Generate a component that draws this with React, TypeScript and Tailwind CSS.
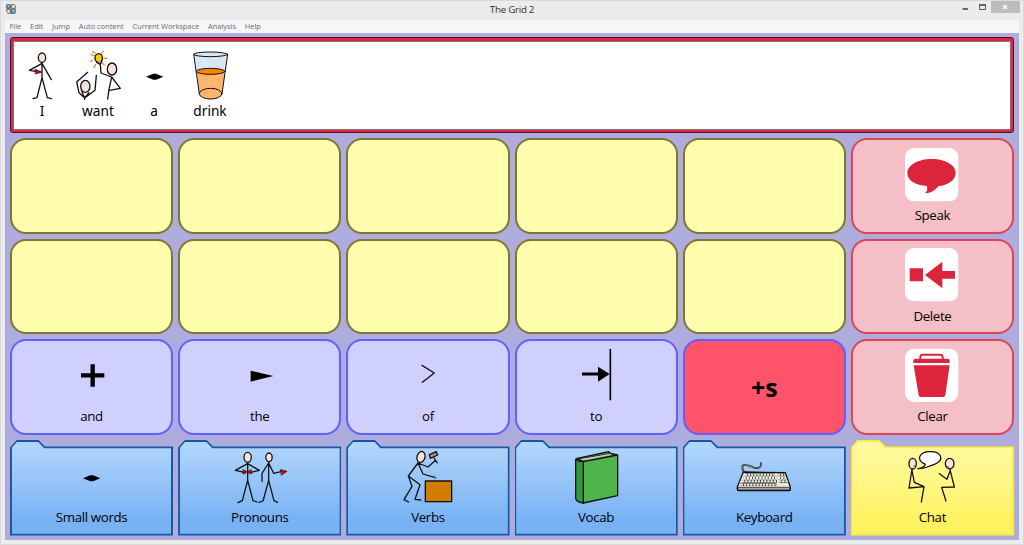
import type { ReactNode } from "react";
import clsx from "clsx";

const INK = "#111111";
const RED = "#dc243c";

function Diamond({ x, y }: { x: number; y: number }) {
  return <path d={`M${x - 26} ${y}L${x - 4} ${y - 9}H${x + 4}L${x + 26} ${y}L${x + 4} ${y + 9}H${x - 4}Z`} fill="#000" />;
}

function Word({ x, label, children }: { x: number; label: string; children: ReactNode }) {
  return (
    <div className="flex w-14 flex-col items-center">
      <svg width="56" height="52" viewBox={`${x} 150 168 156`} fill="none" stroke={INK} strokeWidth="3.9" strokeLinecap="round" strokeLinejoin="round">
        {children}
      </svg>
      <span className="font-['Noto_Sans',sans-serif] text-[13.7px] leading-[18px] text-black">{label}</span>
    </div>
  );
}

function MessageBar() {
  return (
    <div className="-ml-[0.5px] h-24 rounded-[3px] border border-[#501028] bg-[#dc2840] p-[2.5px]">
      <div className="flex h-full border border-[#85727c] bg-white pt-[8.5px]">
        <Word x={42} label="I">
          <ellipse cx="126" cy="173" rx="11" ry="14" fill="#f8e3dc" />
          <path d="M126 187V233L111 293L99 296M126 233L142 293L154 296M126 190L88 211L112 215M126 190L154 239" />
          <path d="M106 208L126 216L107 222Z" fill="#e00000" strokeWidth="2" />
        </Word>
        <Word x={210} label="want">
          <path d="M282 167L273 164M286 159L277 155M305 160L310 154M311 175H321M306 188L313 195M287 194L282 203M278 181L271 184" stroke="#f08a24" />
          <ellipse cx="296" cy="174" rx="11" ry="13" fill="#ffc90e" />
          <path d="M290 187L301 193L306 182" fill="#c8b4ad" />
          <ellipse cx="336" cy="207" rx="14" ry="18" fill="#f8e3dc" />
          <path d="M301 193L303 219L335 231L327 268L323 297M335 231L361 265L328 271" />
          <ellipse cx="256" cy="259" rx="14" ry="18" fill="#f8e3dc" />
          <path d="M263 217L230 246L237 278L254 294L285 271L289 226M245 274L254 294L267 278M254 294V298" />
        </Word>
        <Word x={378} label="a">
          <g stroke="none"><Diamond x={464} y={230} /></g>
        </Word>
        <Word x={546} label="drink">
          <path d="M582 163L599 284Q632 313 666 284L682 163Z" fill="#d8e7f4" stroke="none" />
          <path d="M590 214L600 284Q632 310 665 284L675 214Z" fill="#ffb56b" stroke="none" />
          <ellipse cx="632" cy="214" rx="43" ry="9" fill="#ff8500" strokeWidth="3" />
          <ellipse cx="632" cy="163" rx="51" ry="7" fill="#d8e7f4" strokeWidth="3" />
          <ellipse cx="632" cy="281" rx="34" ry="16" fill="#ffb56b" strokeWidth="3" />
          <path d="M581 163L598 281M683 163L666 281" strokeWidth="3" />
        </Word>
      </div>
    </div>
  );
}

function CellBody({ label, x, y, children }: { label: string; x: number; y: number; children: ReactNode }) {
  return (
    <>
      <svg width="100" height="64" viewBox={`${x} ${y} 300 192`} fill="none" stroke={INK} strokeWidth="3.9" strokeLinecap="round" strokeLinejoin="round" className="shrink-0">
        {children}
      </svg>
      <span className="text-[13.3px] leading-[26px] font-medium tracking-[-0.35px] text-black">{label}</span>
    </>
  );
}

const tones = {
  yellow: "border-[#81762f] bg-[#fffeae]",
  violet: "border-[#605fff] bg-[#d0d0ff]",
  pink: "border-[#df4359] bg-[#f4bfc7]",
  red: "border-[#605fff] bg-[#ff5369]",
};

function Cell({ tone, children }: { tone: keyof typeof tones; children?: ReactNode }) {
  return (
    <div className={clsx("min-h-0 rounded-[16px] border-2", tones[tone])}>
      <div className="-mt-0.5 flex flex-col items-center">{children}</div>
    </div>
  );
}

function Folder({ yellow, children }: { yellow?: boolean; children: ReactNode }) {
  return (
    <div className={clsx("min-h-0 p-[1.7px] [clip-path:polygon(0_7.5px,6.7px_0,28.5px_0,35px_6.7px,100%_6.7px,100%_100%,0_100%)]", yellow ? "bg-[#ffec3d]" : "bg-[#1558a6]")}>
      <div className={clsx("flex h-full flex-col bg-linear-to-b from-5% to-85% [clip-path:polygon(0_6.5px,5.6px_0,26px_0,32.5px_6.7px,100%_6.7px,100%_100%,0_100%)]", yellow ? "from-[#fff9a0] to-[#fff261]" : "from-[#b0d5fb] to-[#78b2f4]")}>
        <div className="-mt-[1.7px] flex flex-col items-center">{children}</div>
      </div>
    </div>
  );
}

function Tile({ y }: { y: number }) {
  return <rect x="196" y={y} width="160" height="160" rx="27" fill="#fff" stroke="none" />;
}

function Grid() {
  return (
    <div className="mt-[5px] grid h-[397.5px] grid-cols-6 grid-rows-4 gap-[5px]">
      <Cell tone="yellow" /><Cell tone="yellow" /><Cell tone="yellow" /><Cell tone="yellow" /><Cell tone="yellow" />
      <Cell tone="pink">
        <CellBody label="Speak" x={127} y={24}>
          <Tile y={54} />
          <path d="M276 87C316 87 348 105 348 128C348 151 323 166 297 168C286 181 274 190 256 189C264 183 263 176 262 168C227 166 203 151 203 129C203 105 236 87 276 87Z" fill={RED} stroke="none" />
        </CellBody>
      </Cell>
      <Cell tone="yellow" /><Cell tone="yellow" /><Cell tone="yellow" /><Cell tone="yellow" /><Cell tone="yellow" />
      <Cell tone="pink">
        <CellBody label="Delete" x={127} y={326}>
          <Tile y={353} />
          <path d="M210 414H250V453H210ZM256 434L308 394V422H346V445H308V474Z" fill={RED} stroke="none" />
        </CellBody>
      </Cell>
      <Cell tone="violet">
        <CellBody label="and" x={125} y={28}>
          <path d="M242 137H312M277 104V171" stroke="#000" strokeWidth="13" strokeLinecap="butt" />
        </CellBody>
      </Cell>
      <Cell tone="violet">
        <CellBody label="the" x={629} y={28}>
          <path d="M751 123L819 139L751 156Z" fill="#000" stroke="none" />
        </CellBody>
      </Cell>
      <Cell tone="violet">
        <CellBody label="of" x={114} y={28}><path d="M246 107L283 130L247 158" /></CellBody>
      </Cell>
      <Cell tone="violet">
        <CellBody label="to" x={618} y={28}>
          <path d="M726 133H778" stroke="#000" strokeWidth="9" strokeLinecap="butt" />
          <path d="M774 111L809 133L774 156Z" fill="#000" stroke="none" />
          <path d="M811 58V212" stroke="#000" strokeWidth="5" strokeLinecap="butt" />
        </CellBody>
      </Cell>
      <Cell tone="red">
        <span className="text-[25px] leading-[96px] font-bold text-black">+s</span>
      </Cell>
      <Cell tone="pink">
        <CellBody label="Clear" x={127} y={28}>
          <Tile y={57} />
          <path d="M242 87V82Q242 75 250 75H301Q309 75 309 82V87" stroke={RED} strokeWidth="6" />
          <path d="M221 100V93Q221 87 228 87H324Q330 87 330 93V100ZM222 107H330L317 197Q316 202 310 202H244Q238 202 237 197Z" fill={RED} stroke="none" />
        </CellBody>
      </Cell>
      <Folder>
        <CellBody label="Small words" x={125} y={13}><g stroke="none"><Diamond x={274} y={128} /></g></CellBody>
      </Folder>
      <Folder>
        <CellBody label="Pronouns" x={629} y={13}>
          <ellipse cx="742" cy="65" rx="11" ry="15" fill="#f8e3dc" />
          <ellipse cx="806" cy="65" rx="9.500" ry="13" fill="#f8e3dc" />
          <path d="M742 81V134L726 195L713 201M742 134L758 195L770 199M742 84L705 104L732 110M742 84L777 104L752 110" />
          <path d="M805 80V135L788 196L776 200M805 135L821 195L832 200M805 82L785 113V137M805 82L820 113L842 108" />
          <path d="M729 102L741 108L753 102V115L741 110L729 115ZM841 102L860 107L844 118Z" fill="#e00000" strokeWidth="2" />
        </CellBody>
      </Folder>
      <Folder>
        <CellBody label="Verbs" x={114} y={13}>
          <ellipse cx="243" cy="64" rx="12" ry="17" transform="rotate(15 243 64)" fill="#f8e3dc" />
          <path d="M234 82L205 121L216 152L192 192L206 199M205 121L240 147L225 191L242 193M234 82L264 94L287 74M234 82L249 115L286 126M282 67L292 82" />
          <path d="M268 57L289 48L293 58L271 68Z" fill="#c88478" />
          <path d="M284 117V134" stroke="#858d97" strokeWidth="2" />
          <rect x="256" y="136" width="79" height="62" fill="#d37d00" />
        </CellBody>
      </Folder>
      <Folder>
        <CellBody label="Vocab" x={618} y={13}>
          <path d="M709 69L806 48L812 53L832 58L730 78Z" fill="#329a3a" />
          <path d="M719 69L810 54L824 59L728 76Z" fill="#aaaaaa" strokeWidth="2" />
          <path d="M724 72L811 56M735 74L820 60" stroke="#e6e6e6" strokeWidth="2" />
          <path d="M730 78L833 58V180L730 202Z" fill="#4eb54c" />
          <path d="M707 71Q712 77 730 78V202Q707 199 707 187Z" fill="#329a3a" />
        </CellBody>
      </Folder>
      <Folder>
        <CellBody label="Keyboard" x={103} y={13}>
          <path d="M194 112C177 80 198 85 223 96C240 99 245 94 244 83" strokeWidth="6" stroke="#333" />
          <path d="M194 112C177 80 198 85 223 96C240 99 245 94 244 83" strokeWidth="2" stroke="#8e9796" />
          <path d="M191 109L317 111L332 154V162Q332 165 327 165H177Q173 165 173 160V153Z" fill="#e8e6db" />
          <path d="M175 155H330V163H177Z" fill="#a6a89e" strokeWidth="2" />
          <path d="M196 117H285M192 127H290M187 137H292M183 147H290M294 117H315M295 127H319M298 137H324" stroke="#343434" strokeWidth="8" strokeLinecap="butt" />
          <path d="M195 117H285M191 127H290M187 137H292M183 147H290M294 117H315M295 127H319M298 137H324" stroke="#f6f4e9" strokeWidth="6" strokeDasharray="7 2.500" strokeLinecap="butt" />
        </CellBody>
      </Folder>
      <Folder yellow>
        <CellBody label="Chat" x={607} y={13}>
          <path d="M715 99Q734 96 737 86C703 71 724 47 751 48C785 47 797 74 764 86Q754 89 742 94Q731 99 715 99Z" fill="#fff" />
          <ellipse cx="699" cy="84" rx="11" ry="16" fill="#f8e3dc" />
          <ellipse cx="810" cy="84" rx="13" ry="16" fill="#f8e3dc" />
          <path d="M697 100L688 157L733 153L725 199M697 104L704 140L733 153M811 102L824 154L786 155L799 196M812 104L802 131L779 114" />
          <path d="M701 91H707M803 91L808 96" strokeWidth="2" />
        </CellBody>
      </Folder>
    </div>
  );
}

function TitleBar() {
  return (
    <div className="grid h-5 grid-cols-3 items-start">
      <svg width="10" height="10" viewBox="0 0 30 30" className="mt-1 ml-[6px]">
        <path d="M2 2H13V13H2ZM16 16H28V26L25 29H16Z" fill="#4c98e9" stroke="#263747" strokeWidth="2" />
        <path d="M16 2H25L28 6V13H16ZM2 16H13V28H6L2 24Z" fill="#ffe797" stroke="#263747" strokeWidth="2" />
        <path d="M4 5H9V10M18 18H24V24" stroke="#c9e5ff" strokeWidth="2" fill="none" />
      </svg>
      <span className="text-center text-[9.800px] leading-[20px] tracking-[-0.28px] text-[#333]">The Grid 2</span>
      <div className="flex items-start justify-end pr-[4.500px]">
        <svg width="26" height="13" viewBox="0 0 26 13" className="mr-[3px]">
          <path d="M.5 9H6" stroke="#555" strokeWidth="1.7" />
          <path d="M17.500 5H23.500V9.500H17.500Z" fill="none" stroke="#555" />
          <path d="M17 5H24" stroke="#555" strokeWidth="1.5" />
        </svg>
        <div className="flex h-[13px] w-[29px] items-center justify-center bg-[#bcbcbc]">
          <svg width="6" height="6" viewBox="0 0 6 6"><path d="M1 1L5 5M5 1L1 5" stroke="#fff" strokeWidth="1.3" /></svg>
        </div>
      </div>
    </div>
  );
}

export default function App() {
  return (
    <div className="h-[545px] w-[1024px] overflow-hidden border border-[#dadada] bg-[#ebebeb] font-['Open_Sans','Noto_Sans',sans-serif]">
      <div className="-mt-px -ml-px w-[1024px]">
        <TitleBar />
        <div className="mx-[5px] flex h-[13px] items-center gap-[8.800px] bg-[#f4f6f8] pl-[4.500px] text-[7.500px] leading-[13px] tracking-[-0.04px] text-[#6c6c6c]">
          <span>File</span><span>Edit</span><span>Jump</span><span>Auto content</span><span>Current Workspace</span><span>Analysis</span><span>Help</span>
        </div>
        <div className="mx-[5px] h-[507px] bg-[#adacdd] px-[5px] pt-1">
          <MessageBar />
          <Grid />
        </div>
      </div>
    </div>
  );
}
